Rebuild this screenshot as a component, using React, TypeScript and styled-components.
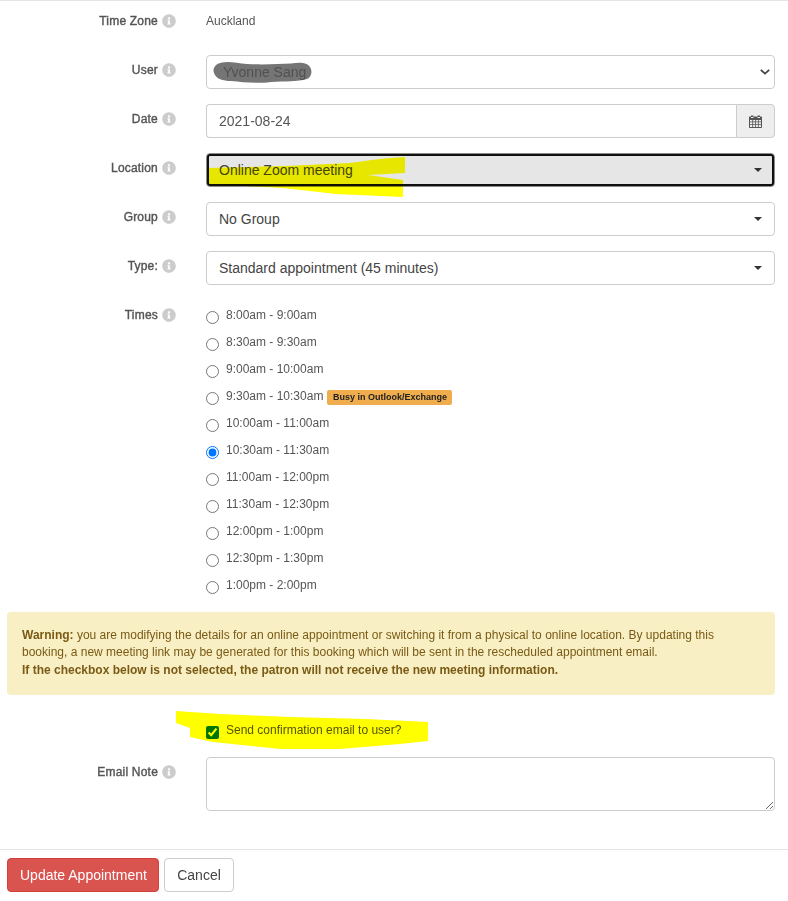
import React from "react";
import styled, { createGlobalStyle } from "styled-components";
import { FaInfoCircle } from "react-icons/fa";

const Global = createGlobalStyle`
  html, body { margin: 0; padding: 0; background: #fff; }
  body { font-family: "Liberation Sans", Arial, sans-serif; font-size: 14px; color: #333; }
`;

const Page = styled.div`
  width: 788px;
  height: 901px;
  overflow: hidden;
  border-top: 1px solid #e5e5e5;
  box-sizing: border-box;
  display: flex;
  flex-direction: column;
`;

const Form = styled.div`
  height: 849px;
  flex: none;
  border-bottom: 1px solid #e5e5e5;
  box-sizing: border-box;
  padding: 0 13px 0 7px;
`;

const Row = styled.div<{ $h?: number; $mb?: number }>`
  position: relative;
  display: grid;
  grid-template-columns: 169px 1fr;
  column-gap: 30px;
  height: ${(p) => p.$h ?? 34}px;
  margin-bottom: ${(p) => p.$mb ?? 15}px;
`;

const Label = styled.div<{ $top?: number }>`
  display: flex;
  justify-content: flex-end;
  align-items: center;
  gap: 4px;
  height: 14px;
  padding-top: ${(p) => p.$top ?? 8}px;
  font-size: 12px;
  color: #555;
  line-height: 14px;
  letter-spacing: 0.2px;
  -webkit-text-stroke: 0.4px #555;
`;

const Info = styled(FaInfoCircle)`
  width: 14px;
  height: 14px;
  color: #ccc;
  flex: none;
`;

const Static = styled.div`
  font-size: 12px;
  color: #555;
  line-height: 14px;
  padding-top: 13px;
`;

const Field = styled.div`
  position: relative;
  height: 34px;
`;

const NativeSelect = styled.select`
  appearance: none;
  width: 100%;
  height: 34px;
  box-sizing: border-box;
  border: 1px solid #ccc;
  border-radius: 4px;
  background: #fff;
  padding: 0 16px;
  font-family: inherit;
  font-size: 14px;
  color: #b0b0b0;
`;

const Chevron = styled.svg`
  position: absolute;
  right: 5px;
  top: 14px;
  width: 10px;
  height: 6px;
  pointer-events: none;
`;

const Scribble = styled.svg`
  position: absolute;
  left: 7px;
  top: 6px;
  width: 99px;
  height: 23px;
  mix-blend-mode: multiply;
  pointer-events: none;
`;

const InputGroup = styled.div`
  display: flex;
  height: 34px;
`;

const TextInput = styled.input`
  flex: 1;
  min-width: 0;
  box-sizing: border-box;
  border: 1px solid #ccc;
  border-right: 0;
  border-radius: 4px 0 0 4px;
  padding: 0 12px;
  font-family: inherit;
  font-size: 14px;
  color: #555;
  outline: none;
`;

const Addon = styled.div`
  width: 39px;
  box-sizing: border-box;
  border: 1px solid #ccc;
  border-radius: 0 4px 4px 0;
  background: #eee;
  display: flex;
  align-items: center;
  justify-content: center;
`;

const DropButton = styled.div<{ $focus?: boolean }>`
  height: 34px;
  box-sizing: border-box;
  border: 1px solid ${(p) => (p.$focus ? "#8c8c8c" : "#ccc")};
  border-radius: 4px;
  background: ${(p) => (p.$focus ? "#e6e6e6" : "#fff")};
  padding: 0 12px;
  display: flex;
  align-items: center;
  justify-content: space-between;
  font-size: 14px;
  color: #444;
  ${(p) => p.$focus && "outline: 2px solid #101010; outline-offset: -3px;"}
`;

const Caret = styled.span`
  width: 0;
  height: 0;
  border-top: 4px solid #333;
  border-left: 4px solid transparent;
  border-right: 4px solid transparent;
`;

const Highlight = styled.svg<{ $left: number; $top: number; $w: number; $h: number }>`
  position: absolute;
  left: ${(p) => p.$left}px;
  top: ${(p) => p.$top}px;
  width: ${(p) => p.$w}px;
  height: ${(p) => p.$h}px;
  mix-blend-mode: multiply;
  pointer-events: none;
`;

const Times = styled.div`
  display: flex;
  flex-direction: column;
  padding-top: 8px;
`;

const TimeOption = styled.label`
  display: flex;
  align-items: flex-start;
  height: 27px;
  font-size: 12px;
  color: #555;
  line-height: 14px;
`;

const Radio = styled.input`
  width: 13px;
  height: 13px;
  margin: 3px 7px 0 0;
  flex: none;
`;

const Badge = styled.span`
  display: inline-block;
  margin-left: 4px;
  margin-top: 1px;
  height: 15px;
  line-height: 15px;
  padding: 0 5.5px;
  border-radius: 2px;
  background: #f0ad4e;
  color: #222;
  font-size: 9px;
  font-weight: 700;
`;

const Warning = styled.div`
  height: 83px;
  box-sizing: border-box;
  margin-bottom: 24px;
  padding: 15px;
  background: #f8efc5;
  border-radius: 4px;
  color: #7a5a14;
  font-size: 12px;
  line-height: 17.4px;
`;

const CheckRow = styled.label`
  display: flex;
  align-items: flex-start;
  padding-top: 4px;
  font-size: 12px;
  color: #555;
  line-height: 14px;
`;

const Check = styled.input`
  width: 13px;
  height: 13px;
  margin: 3px 7px 0 0;
`;

const Note = styled.textarea`
  width: 100%;
  height: 54px;
  box-sizing: border-box;
  display: block;
  border: 1px solid #ccc;
  border-radius: 4px;
  outline: none;
`;

const Footer = styled.div`
  display: flex;
  gap: 5px;
  padding: 8px 7px 0;
`;

const Btn = styled.button<{ $primary?: boolean }>`
  height: 34px;
  box-sizing: border-box;
  padding: 0 12px;
  border: 1px solid ${(p) => (p.$primary ? "#d43f3a" : "#ccc")};
  border-radius: 4px;
  background: ${(p) => (p.$primary ? "#d9534f" : "#fff")};
  color: ${(p) => (p.$primary ? "#fff" : "#444")};
  font-family: inherit;
  font-size: 14px;
  width: ${(p) => (p.$primary ? "152px" : "70px")};
  white-space: nowrap;
`;

const times = [
  "8:00am - 9:00am",
  "8:30am - 9:30am",
  "9:00am - 10:00am",
  "9:30am - 10:30am",
  "10:00am - 11:00am",
  "10:30am - 11:30am",
  "11:00am - 12:00pm",
  "11:30am - 12:30pm",
  "12:00pm - 1:00pm",
  "12:30pm - 1:30pm",
  "1:00pm - 2:00pm",
];

const CalendarIcon = () => (
  <svg width="13" height="14" viewBox="0 0 13 14" fill="#555">
    <path d="M2 1.6h2.4V3H2zM8.6 1.6H11V3H8.6z" />
    <path
      fillRule="evenodd"
      d="M1 2.4h1v1.6h2.4V2.4h4.2v1.6H11V2.4h1c.6 0 1 .4 1 1V13c0 .6-.4 1-1 1H1c-.6 0-1-.4-1-1V3.4c0-.6.4-1 1-1zM1 6v1.5h2.3V6zm3.1 0v1.5h2V6zm2.8 0v1.5h2V6zm2.8 0v1.5H12V6zM1 8.3v1.6h2.3V8.3zm3.1 0v1.6h2V8.3zm2.8 0v1.6h2V8.3zm2.8 0v1.6H12V8.3zM1 10.7V13h2.3v-2.3zm3.1 0V13h2v-2.3zm2.8 0V13h2v-2.3zm2.8 0V13H12v-2.3z"
    />
  </svg>
);

export default function App() {
  return (
    <Page>
      <Global />
      <Form>
        <Row $h={39}>
          <Label $top={13}>
            Time Zone <Info />
          </Label>
          <Static>Auckland</Static>
        </Row>
        <Row>
          <Label>
            User <Info />
          </Label>
          <Field>
            <NativeSelect defaultValue="y">
              <option value="y">Yvonne Sang</option>
            </NativeSelect>
            <Chevron viewBox="0 0 10 6">
              <path d="M0.8 0.8 L5 4.6 L9.2 0.8" fill="none" stroke="#444" strokeWidth="1.8" />
            </Chevron>
            <Scribble viewBox="0 0 99 23">
              <path
                d="M9 1.5 C16 0 24 2 34 3 C50 4 66 3 78 2.5 C86 1 94 1 97 6 C100 11 98 16 94 18 C84 21 72 20 58 21 C42 23 30 21 18 20 C10 20 3 18 1 12 C-1 7 3 2.5 9 1.5Z"
                fill="#757575"
              />
            </Scribble>
          </Field>
        </Row>
        <Row>
          <Label>
            Date <Info />
          </Label>
          <InputGroup>
            <TextInput defaultValue="2021-08-24" />
            <Addon>
              <CalendarIcon />
            </Addon>
          </InputGroup>
        </Row>
        <Row>
          <Label>
            Location <Info />
          </Label>
          <DropButton $focus>
            Online Zoom meeting
            <Caret />
          </DropButton>
          <Highlight $left={199} $top={0} $w={200} $h={46} viewBox="0 0 200 46">
            <path
              d="M1 15 L80 13 L144 10 C165 7 180 5 199 4 L199 20 L162 22 L197 27 L197 44 L130 41 L77 35 L1 31 Z"
              fill="#ff0"
            />
          </Highlight>
        </Row>
        <Row>
          <Label>
            Group <Info />
          </Label>
          <DropButton>
            No Group
            <Caret />
          </DropButton>
        </Row>
        <Row>
          <Label>
            Type: <Info />
          </Label>
          <DropButton>
            Standard appointment (45 minutes)
            <Caret />
          </DropButton>
        </Row>
        <Row $h={312} $mb={0}>
          <Label $top={8}>
            Times <Info />
          </Label>
          <Times>
            {times.map((t, i) => (
              <TimeOption key={t}>
                <Radio type="radio" name="time" defaultChecked={i === 5} />
                {t}
                {i === 3 && <Badge>Busy in Outlook/Exchange</Badge>}
              </TimeOption>
            ))}
          </Times>
        </Row>
        <Warning>
          <b>Warning:</b> you are modifying the details for an online appointment or switching it from a physical to
          online location. By updating this booking, a new meeting link may be generated for this booking which will be
          sent in the rescheduled appointment email.
          <br />
          <b>If the checkbox below is not selected, the patron will not receive the new meeting information.</b>
        </Warning>
        <Row $h={25} $mb={13}>
          <div />
          <CheckRow>
            <Check type="checkbox" defaultChecked />
            Send confirmation email to user?
          </CheckRow>
          <Highlight $left={169} $top={-8} $w={253} $h={40} viewBox="0 0 253 40">
            <path
              d="M0 0 L44 3 L114 6 L190 8 L252 11 L252 30 L224 33 L164 38 L104 38 L37 31 L14 26 L14 17 L0 12 Z"
              fill="#ff0"
            />
          </Highlight>
        </Row>
        <Row $h={54} $mb={0}>
          <Label>
            Email Note <Info />
          </Label>
          <Note />
        </Row>
      </Form>
      <Footer>
        <Btn $primary>Update Appointment</Btn>
        <Btn>Cancel</Btn>
      </Footer>
    </Page>
  );
}
